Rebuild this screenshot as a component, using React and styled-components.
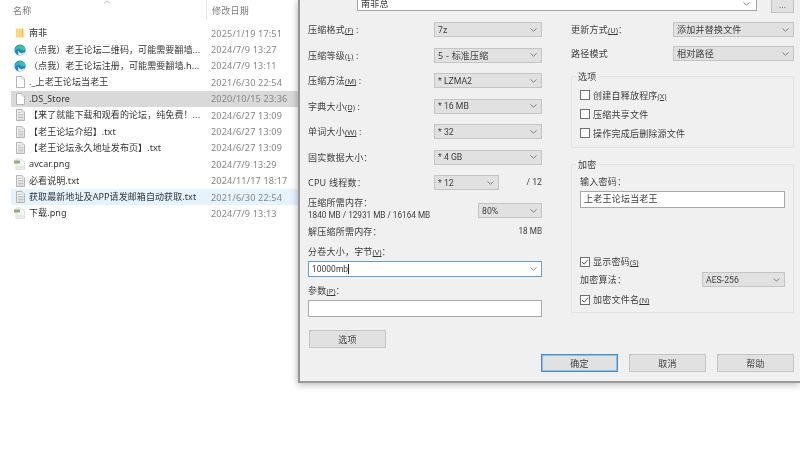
import React from "react";
import styled, { createGlobalStyle } from "styled-components";

const Global = createGlobalStyle`
  html, body { margin: 0; padding: 0; background: #fff; }
  body { font-family: "Noto Sans", "Noto Sans CJK SC", sans-serif; }
  * { box-sizing: border-box; }
`;

const LATIN = `Roboto, "Noto Sans CJK SC", sans-serif`;

const Page = styled.div`
  width: 800px; height: 469px; overflow: hidden; display: flex; background: #fff;
  font-family: "Noto Sans", "Noto Sans CJK SC", sans-serif;
  filter: blur(0.42px);
`;

const Explorer = styled.div`
  width: 298px; flex: none; display: flex; flex-direction: column;
`;
const HeaderRow = styled.div`
  height: 25px; display: grid; grid-template-columns: 206px 1fr; position: relative;
  font-size: 9px; color: #7b7b7b; letter-spacing: 0.25px;
`;
const HeaderName = styled.div`
  padding: 5px 0 0 13px; line-height: 11px;
`;
const HeaderDate = styled.div`
  height: 20px; border-left: 1px solid #e6e6e6; padding: 5px 0 0 5px; line-height: 11px;
`;
const SortCaret = styled.svg`
  position: absolute; left: 103px; top: 0; width: 8px; height: 4px;
`;
const FileRow = styled.div`
  height: 16.4px; margin-left: 11px; display: grid; grid-template-columns: 195px 1fr; align-items: center;
  background: ${p => p.$state === "selected" ? "#d9d9d9" : p.$state === "hover" ? "#e5f3ff" : "transparent"};
`;
const NameCell = styled.div`
  display: flex; align-items: center; min-width: 0;
`;
const IconSlot = styled.div`
  width: 18px; flex: none; padding-left: 3px; display: flex; align-items: center;
`;
const FileName = styled.span`
  font-size: 9px; color: #333; white-space: nowrap; line-height: 14px; letter-spacing: 0.01em;
`;
const FileDate = styled.span`
  font-size: 9.1px; color: #858585; white-space: nowrap; letter-spacing: 0.15px; padding-left: 5px;
`;

const Dialog = styled.div`
  width: 502px; height: 383px; flex: none; background: #f0f0f0; display: flex; flex-direction: column;
  border-left: 2px solid #959595; border-bottom: 2px solid #9a9a9a;
  box-shadow: 0 3px 7px rgba(0,0,0,.18), -2px 0 5px rgba(0,0,0,.1);
  font-size: 9px; color: #3c3c3c; letter-spacing: 0.025em;
`;
const PathRow = styled.div`
  display: flex; height: 12px; padding-left: 57px;
`;
const PathBox = styled.div`
  width: 400px; height: 11px; background: #fff; border: 1px solid #a5a5a5; border-top: 0;
  display: flex; align-items: center; justify-content: space-between; padding: 0 6px 3px 3px;
  overflow: hidden; font-size: 9px; line-height: 10px;
`;
const BrowseButton = styled.div`
  width: 23px; height: 13px; margin-left: 14px; background: #e1e1e1; border: 1px solid #c0c0c0; border-top: 0;
  font-size: 8px; text-align: center; line-height: 9px; color: #666;
`;
const Columns = styled.div`
  display: flex; padding: 10px 0 0 8px; gap: 29px; flex: 1;
`;
const LeftColumn = styled.div`
  width: 234px; display: flex; flex-direction: column;
`;
const RightColumn = styled.div`
  width: 223px; display: flex; flex-direction: column;
`;
const Row = styled.div`
  height: ${p => p.$h || 25.5}px; display: flex; align-items: flex-start; justify-content: space-between; flex: none;
`;
const Label = styled.span`
  line-height: 15px; white-space: nowrap;
`;
const SelectBox = styled.div`
  width: ${p => p.$w}px; height: 15px; flex: none; background: #e1e1e1; border: 1px solid #c4c4c4;
  display: flex; align-items: center; justify-content: space-between; padding: 0 4px 0 3px;
  white-space: nowrap; margin-top: ${p => p.$mt || 0}px;
  font-size: ${p => p.$latin ? "8.7px" : "9px"};
  font-family: ${p => p.$latin ? LATIN : "inherit"};
  letter-spacing: ${p => p.$latin ? 0 : "0.025em"};
`;
const Group = styled.div`
  display: flex;
`;
const CpuTotal = styled.span`
  margin-left: 30px; width: 13px; white-space: nowrap; letter-spacing: 0;
  font: 8.7px/15px ${LATIN}; text-align: right;
  direction: rtl;
`;
const MemoryText = styled.div`
  display: flex; flex-direction: column; line-height: 12px;
`;
const SmallLine = styled.span`
  font: 8.2px/12px ${LATIN}; letter-spacing: 0; white-space: nowrap;
`;
const SmallValue = styled(SmallLine)`
  line-height: 15px;
`;
const FieldLabel = styled.div`
  line-height: 14px; height: 14px; margin-top: ${p => p.$mt}px;
`;
const VolumeInput = styled.div`
  height: 16px; margin-top: 2px; background: #fff; border: 1px solid #5f9fd0;
  display: flex; align-items: center; justify-content: space-between; padding: 0 4px 0 3px;
  font: 8.5px ${LATIN}; letter-spacing: 0;
`;
const Caret = styled.i`
  display: inline-block; width: 1px; height: 10px; background: #222; vertical-align: -2px;
`;
const ParamInput = styled.div`
  height: 17px; margin-top: 2px; background: #fff; border: 1px solid #a8a8a8;
`;
const Button = styled.div`
  width: ${p => p.$w || 77}px; height: ${p => p.$h || 18}px; background: #e1e1e1;
  border: ${p => p.$primary ? "1px solid #3f8fcb" : "1px solid #c4c4c4"};
  box-shadow: ${p => p.$primary ? "inset 0 0 0 1px #8fc0e4" : "none"};
  display: flex; align-items: center; justify-content: center; font-size: 9px; flex: none;
`;
const OptionsButton = styled(Button)`
  margin-top: 13px; margin-left: 1px;
`;
const Footer = styled.div`
  height: 27px; display: flex; justify-content: flex-end; gap: 11px; padding-right: 6px; flex: none;
`;
const Frame = styled.div`
  position: relative; border: 1px solid #e3e3e3; height: ${p => p.$h}px; margin-top: ${p => p.$mt}px;
  padding: ${p => p.$pt}px 8px 0 8px; display: flex; flex-direction: column;
`;
const Legend = styled.span`
  position: absolute; left: 4px; top: -7px; padding: 0 2px; background: #f0f0f0; line-height: 13px;
`;
const CheckRow = styled.div`
  display: flex; align-items: center; gap: 3px; height: ${p => p.$h || 19}px; flex: none; margin-top: ${p => p.$mt || 0}px;
`;
const CheckBox = styled.div`
  width: 10px; height: 10px; background: #fff; border: 1px solid #707070; flex: none; display: flex; align-items: center; justify-content: center;
`;
const PasswordInput = styled.div`
  height: 17px; margin-top: 3px; background: #fff; border: 1px solid #a8a8a8; padding: 0 3px; line-height: 14px; font-size: 9px;
`;
const AlgoRow = styled.div`
  display: flex; align-items: center; justify-content: space-between; height: 16px; margin-top: 1px; flex: none;
`;
const Key = styled.span`
  font-size: 7.5px; letter-spacing: 0; text-decoration: underline;
`;

const Chevron = () => (
  <svg width="7" height="4" viewBox="0 0 7 4" style={{ flex: "none" }}>
    <path d="M0.5 0.5 L3.5 3.2 L6.5 0.5" fill="none" stroke="#777" strokeWidth="0.9" />
  </svg>
);

const Select = ({ w, mt, latin, children }) => (
  <SelectBox $w={w} $mt={mt} $latin={latin}><span>{children}</span><Chevron /></SelectBox>
);

const Check = ({ on }) => (
  <CheckBox>
    {on && (
      <svg width="8" height="8" viewBox="0 0 8 8">
        <path d="M1 4 L3.2 6.2 L7 1.6" fill="none" stroke="#444" strokeWidth="0.9" />
      </svg>
    )}
  </CheckBox>
);

const FolderIcon = () => (
  <svg width="12" height="12" viewBox="0 0 12 12">
    <path d="M2 1.5 H8 V10.5 H2 Z" fill="#fbd777" />
    <path d="M8 1.5 H9.5 V10.5 H8 Z" fill="#f3c04f" />
  </svg>
);
const EdgeIcon = () => (
  <svg width="12" height="12" viewBox="0 0 13 13">
    <circle cx="6.5" cy="6.5" r="6" fill="#1a82d6" />
    <path d="M1 7 C1.5 3 5 1 8 1.3 C10.5 1.6 12.5 4 12.5 7 L7.5 7.4 C8 5.8 6.5 4.8 5 5.2 C3 5.7 2 6.5 1 7 Z" fill="#35c1a8" />
    <path d="M5.2 7.4 C5.2 9.2 7 10.2 8.8 9.8 C10 9.6 11 9 11.6 8.2 C11.2 10.6 9 12.6 6.5 12.5 C4.5 12.4 3.5 9.5 5.2 7.4 Z" fill="#fff" opacity="0.9" />
    <path d="M7 7.4 L12.5 7 L12.4 8 L7.4 8.3 Z" fill="#1a82d6" />
  </svg>
);
const PageIcon = ({ lines }) => (
  <svg width="10" height="12" viewBox="0 0 10 12" style={{ marginLeft: 2 }}>
    <path d="M0.5 0.5 H6 L8.5 3 V11.5 H0.5 Z" fill={lines ? "#eeeeee" : "#fff"} stroke="#b5b5b5" />
    <path d="M6 0.5 V3 H8.5" fill="#fff" stroke="#c8c8c8" />
    {lines && <path d="M2 3.5 H5 M2 5.5 H7.5 M2 7 H7.5 M2 8.5 H7.5 M2 10 H7.5" stroke="#bdbdbd" strokeWidth="0.8" />}
  </svg>
);
const PngIcon = () => (
  <svg width="11" height="12" viewBox="0 0 11 12">
    <path d="M2 1 H7.5 L10.5 4 V11.5 H2 Z" fill="#f7f7f2" stroke="#dddddd" />
    <path d="M0 2.5 H6 V5.5 H0 Z" fill="#8fb178" />
    <path d="M2.5 8 H9.5 V10.5 H2.5 Z" fill="#dfead2" />
  </svg>
);

const files = [
  ["folder", "南非", "2025/1/19 17:51"],
  ["edge", "（点我）老王论坛二维码，可能需要翻墙...", "2024/7/9 13:27"],
  ["edge", "（点我）老王论坛注册，可能需要翻墙.h...", "2024/7/9 13:11"],
  ["blank", "._上老王论坛当老王", "2021/6/30 22:54"],
  ["blank", ".DS_Store", "2020/10/15 23:36", "selected"],
  ["txt", "【来了就能下载和观看的论坛，纯免费！...", "2024/6/27 13:09"],
  ["txt", "【老王论坛介绍】.txt", "2024/6/27 13:09"],
  ["txt", "【老王论坛永久地址发布页】.txt", "2024/6/27 13:09"],
  ["png", "avcar.png", "2024/7/9 13:29"],
  ["txt", "必看说明.txt", "2024/11/17 18:17"],
  ["txt", "获取最新地址及APP请发邮箱自动获取.txt", "2021/6/30 22:54", "hover"],
  ["png", "下载.png", "2024/7/9 13:13"],
];

const icons = {
  folder: <FolderIcon />,
  edge: <EdgeIcon />,
  blank: <PageIcon />,
  txt: <PageIcon lines />,
  png: <PngIcon />,
};

const topRows = [
  ["压缩格式", "(F)", "7z", true],
  ["压缩等级", "(L)", "5 - 标准压缩", false],
  ["压缩方法", "(M)", "* LZMA2", true],
  ["字典大小", "(D)", "* 16 MB", true],
  ["单词大小", "(W)", "* 32", true],
  ["固实数据大小", "", "* 4 GB", true],
];

export default function App() {
  return (
    <Page>
      <Global />
      <Explorer>
        <HeaderRow>
          <HeaderName>名称</HeaderName>
          <HeaderDate>修改日期</HeaderDate>
          <SortCaret viewBox="0 0 8 4">
            <path d="M1 3.5 L4 0.8 L7 3.5" fill="none" stroke="#aaa" strokeWidth="0.8" />
          </SortCaret>
        </HeaderRow>
        {files.map(([kind, name, date, state]) => (
          <FileRow key={name} $state={state}>
            <NameCell>
              <IconSlot>{icons[kind]}</IconSlot>
              <FileName>{name}</FileName>
            </NameCell>
            <FileDate>{date}</FileDate>
          </FileRow>
        ))}
      </Explorer>
      <Dialog>
        <PathRow>
          <PathBox><span>南非总</span><Chevron /></PathBox>
          <BrowseButton>...</BrowseButton>
        </PathRow>
        <Columns>
          <LeftColumn>
            {topRows.map(([text, key, value, latin]) => (
              <Row key={text}>
                <Label>{text}<Key>{key}</Key>{key ? " :" : "："}</Label>
                <Select w={108} latin={latin}>{value}</Select>
              </Row>
            ))}
            <Row $h={22}>
              <Label>CPU 线程数：</Label>
              <Group>
                <Select w={65} latin>* 12</Select>
                <CpuTotal><bdi>/ 12</bdi></CpuTotal>
              </Group>
            </Row>
            <Row $h={27}>
              <MemoryText>
                <span>压缩所需内存：</span>
                <SmallLine>1840 MB / 12931 MB / 16164 MB</SmallLine>
              </MemoryText>
              <Select w={64} mt={6} latin>80%</Select>
            </Row>
            <Row $h={18}>
              <Label>解压缩所需内存：</Label>
              <SmallValue>18 MB</SmallValue>
            </Row>
            <FieldLabel $mt={3}>分卷大小，字节<Key>(V)</Key>：</FieldLabel>
            <VolumeInput><span>10000mb<Caret /></span><Chevron /></VolumeInput>
            <FieldLabel $mt={7}>参数<Key>(P)</Key>：</FieldLabel>
            <ParamInput />
            <OptionsButton>选项</OptionsButton>
          </LeftColumn>
          <RightColumn>
            <Row $h={24}>
              <Label>更新方式<Key>(U)</Key>：</Label>
              <Select w={121}>添加并替换文件</Select>
            </Row>
            <Row $h={29.5}>
              <Label>路径模式</Label>
              <Select w={121}>相对路径</Select>
            </Row>
            <Frame $h={72} $mt={0} $pt={9}>
              <Legend>选项</Legend>
              <CheckRow><Check /><span>创建自释放程序<Key>(X)</Key></span></CheckRow>
              <CheckRow><Check /><span>压缩共享文件</span></CheckRow>
              <CheckRow><Check /><span>操作完成后删除源文件</span></CheckRow>
            </Frame>
            <Frame $h={149} $mt={16} $pt={10}>
              <Legend>加密</Legend>
              <span>输入密码：</span>
              <PasswordInput>上老王论坛当老王</PasswordInput>
              <CheckRow $mt={45} $h={18}><Check on /><span>显示密码<Key>(S)</Key></span></CheckRow>
              <AlgoRow>
                <span>加密算法：</span>
                <Select w={83} latin>AES-256</Select>
              </AlgoRow>
              <CheckRow $mt={4} $h={16}><Check on /><span>加密文件名<Key>(N)</Key></span></CheckRow>
            </Frame>
          </RightColumn>
        </Columns>
        <Footer>
          <Button $primary>确定</Button>
          <Button>取消</Button>
          <Button>帮助</Button>
        </Footer>
      </Dialog>
    </Page>
  );
}
